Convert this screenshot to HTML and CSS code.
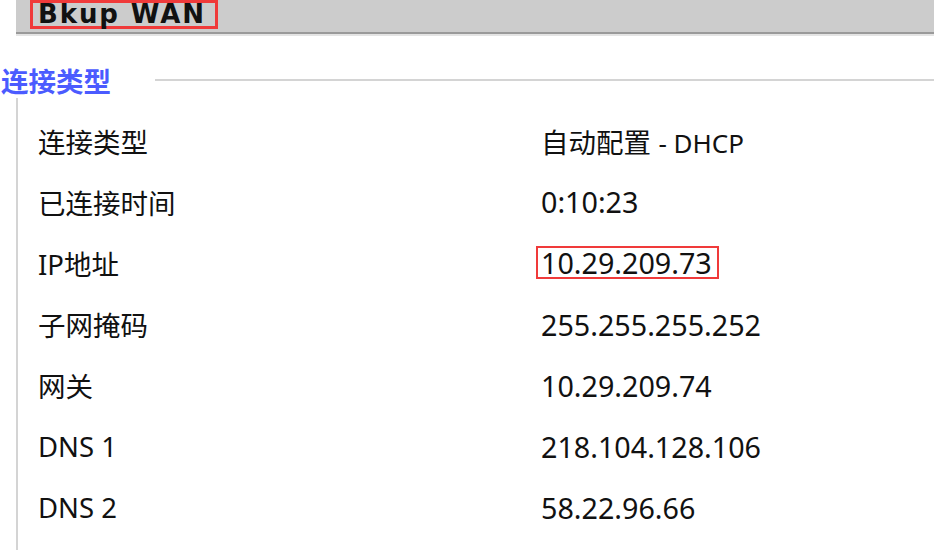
FILE: index.html
```html
<!DOCTYPE html>
<html lang="zh-CN">
<head>
    <meta charset="UTF-8">
    <title>Bkup WAN</title>
    <link rel="stylesheet" href="styles.css">
</head>
<body>
    <div class="page-head">
        <span class="page-title">Bkup WAN</span>
    </div>

    <div class="group">
        <div class="group-legend">
            <span class="legend-text">连接类型</span>
            <span class="legend-line"></span>
        </div>
        <div class="group-body">
            <div class="row"><span class="label">连接类型</span><span class="value"><span class="zh">自动配置</span> <span class="en">- DHCP</span></span></div>
            <div class="row"><span class="label">已连接时间</span><span class="value">0:10:23</span></div>
            <div class="row"><span class="label">IP<span class="zh">地址</span></span><span class="value"><span class="mark">10.29.209.73</span></span></div>
            <div class="row"><span class="label">子网掩码</span><span class="value">255.255.255.252</span></div>
            <div class="row"><span class="label">网关</span><span class="value">10.29.209.74</span></div>
            <div class="row"><span class="label">DNS 1</span><span class="value">218.104.128.106</span></div>
            <div class="row"><span class="label">DNS 2</span><span class="value">58.22.96.66</span></div>
        </div>
    </div>
</body>
</html>
```

FILE: styles.css
```css
* {
    box-sizing: border-box;
}

body {
    margin: 0;
    background: #ffffff;
    color: #111111;
    font-family: "Noto Sans", "Noto Sans CJK SC", sans-serif;
    font-size: 26px;
    overflow: hidden;
}

.page-head {
    margin-left: 16px;
    height: 34px;
    background: #cccccc;
    border-bottom: 2px solid #9a9a9a;
    box-shadow: 0 2px 0 #e4e4e4;
    padding-left: 14px;
}

.page-title {
    display: inline-block;
    vertical-align: top;
    height: 29px;
    padding: 0 9px 0 5px;
    border: 3px solid #f03a3a;
    font-family: "DejaVu Sans", sans-serif;
    font-weight: bold;
    font-size: 26px;
    line-height: 23px;
    letter-spacing: 1.9px;
    color: #111111;
}

.group {
    margin-top: 30px;
}

.group-legend {
    display: flex;
    align-items: center;
    height: 32px;
}

.legend-text {
    padding-left: 1px;
    color: #4b5bff;
    font-family: "Noto Sans CJK SC", sans-serif;
    font-weight: bold;
    font-size: 27.5px;
    line-height: 32px;
}

.legend-line {
    flex: 1;
    margin-left: 44px;
    border-top: 2px solid #d4d4d4;
}

.group-body {
    margin-left: 16px;
    margin-top: 2px;
    border-left: 2px solid #d4d4d4;
    padding-top: 12px;
    padding-left: 20px;
    height: 600px;
}

.row {
    display: flex;
    align-items: center;
    height: 61.2px;
}

.label {
    width: 503px;
    font-size: 27.5px;
}

.label .zh,
.value .zh {
    font-size: 27.5px;
}

.value {
    font-size: 28.7px;
}

.value .en {
    font-size: 26px;
}

.mark {
    display: inline-block;
    border: 2px solid #f03a3a;
    padding: 0 5px 0 3px;
    margin-left: -5px;
    line-height: 29px;
}
```
